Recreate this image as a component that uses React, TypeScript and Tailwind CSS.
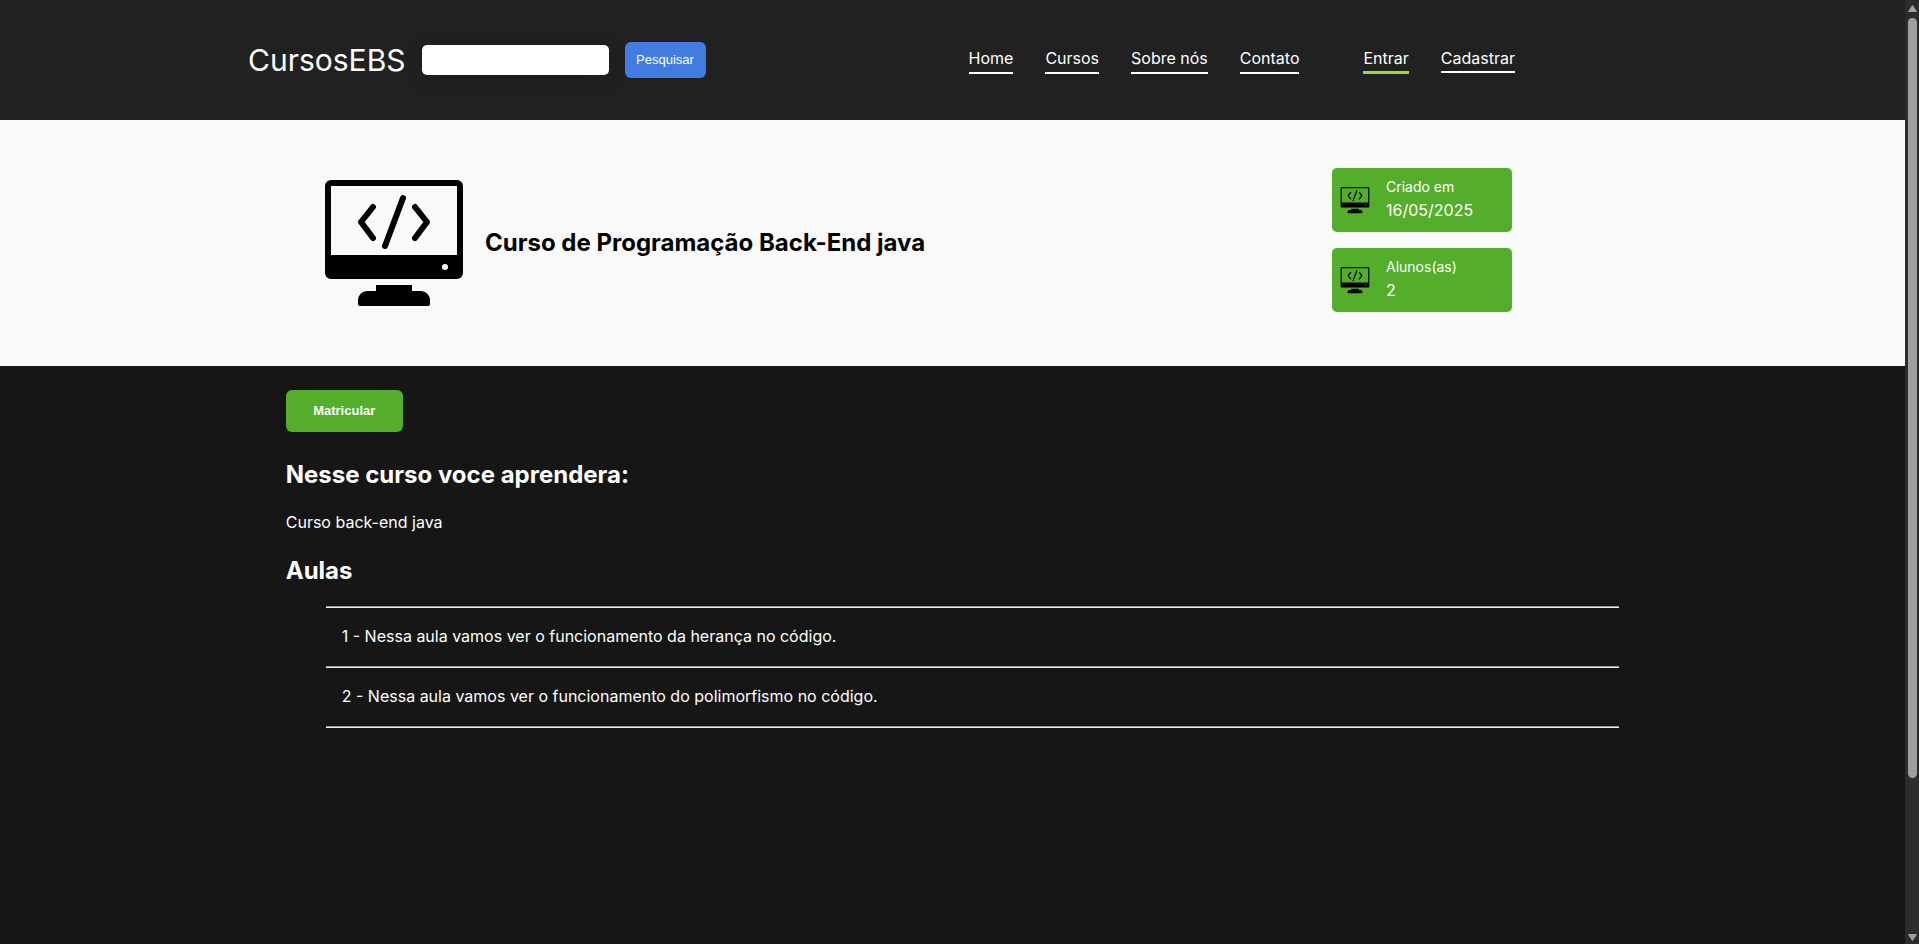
import React from "react";

const navLinks = ["Home", "Cursos", "Sobre nós", "Contato"];

const stats = [
  { label: "Criado em", value: "16/05/2025" },
  { label: "Alunos(as)", value: "2" },
];

const lessons = [
  "1 - Nessa aula vamos ver o funcionamento da herança no código.",
  "2 - Nessa aula vamos ver o funcionamento do polimorfismo no código.",
];

function ComputerIcon({ className }: { className: string }) {
  return (
    <svg viewBox="0 0 144 144" className={className} aria-hidden="true">
      <path
        fillRule="evenodd"
        d="M9 9H135a6 6 0 0 1 6 6V102a6 6 0 0 1-6 6H9a6 6 0 0 1-6-6V15a6 6 0 0 1 6-6ZM9 15V84H135V15ZM123 93a3 3 0 1 0 0 6a3 3 0 1 0 0-6Z"
      />
      <path d="M54 114H90V120H99a9 9 0 0 1 9 9V133a2 2 0 0 1-2 2H38a2 2 0 0 1-2-2V129a9 9 0 0 1 9-9H54Z" />
      <path
        d="M51 36L39 51L51 67M93 36L105 51L93 67M81 27L63 75"
        fill="none"
        stroke="black"
        strokeWidth="6"
        strokeLinecap="round"
        strokeLinejoin="round"
      />
    </svg>
  );
}

function Header() {
  return (
    <header className="flex h-[120px] items-center justify-between bg-[#212121] pr-[390px] pl-[248px]">
      <div className="flex items-center gap-4">
        <a href="#" className="text-[30px] leading-9">
          CursosEBS
        </a>
        <form className="flex items-center gap-4" onSubmit={(e) => e.preventDefault()}>
          <input
            type="text"
            aria-label="Pesquisar cursos"
            className="h-[30px] w-[187px] rounded-[5px] bg-white px-2 text-sm text-black shadow-[0_5px_20px_rgba(0,0,0,0.2)]"
          />
          <button className="h-9 w-[81px] rounded-md bg-[#437ce0] font-['Liberation_Sans',Arial,sans-serif] text-[13px]">
            Pesquisar
          </button>
        </form>
      </div>
      <nav className="flex items-start gap-16 leading-6">
        <div className="flex gap-8">
          {navLinks.map((link) => (
            <a key={link} href="#" className="border-b-2 border-white pb-[2px]">
              {link}
            </a>
          ))}
        </div>
        <div className="flex items-start gap-8">
          <a href="#" className="border-b-3 border-[#9fd43c] pb-px">
            Entrar
          </a>
          <a href="#" className="border-b-2 border-white pb-px">
            Cadastrar
          </a>
        </div>
      </nav>
    </header>
  );
}

function Hero() {
  return (
    <section className="flex items-start justify-between bg-[#f9f9f9] pt-12 pr-[393px] pb-[51px] pl-[322px]">
      <div className="flex items-center gap-[19px] pt-[3px]">
        <ComputerIcon className="size-36" />
        <h1 className="text-2xl leading-7 font-bold text-black">Curso de Programação Back-End java</h1>
      </div>
      <dl className="flex flex-col gap-4">
        {stats.map((stat) => (
          <div key={stat.label} className="flex h-16 w-[180px] items-center gap-4 rounded-[5px] bg-[#54ae2b] pl-2">
            <ComputerIcon className="size-[30px]" />
            <div>
              <dt className="text-sm leading-5">{stat.label}</dt>
              <dd className="leading-[26px]">{stat.value}</dd>
            </div>
          </div>
        ))}
      </dl>
    </section>
  );
}

function LessonRule() {
  return <hr className="border-t border-b border-t-[#9a9a9a] border-b-[#eeeeee]" />;
}

export default function App() {
  return (
    <div className="flex min-h-screen bg-[#161616] font-[Inter,sans-serif] text-base text-white">
      <div className="min-w-0 flex-1">
        <Header />
        <Hero />
        <main className="mx-[15%] pt-6">
          <button className="h-[42px] w-[117px] rounded-md bg-[#54ae2b] font-['Liberation_Sans',Arial,sans-serif] text-[13px] font-bold">
            Matricular
          </button>
          <h2 className="mt-7 text-2xl leading-[30px] font-bold">Nesse curso voce aprendera:</h2>
          <p className="mt-5 mb-[22px] leading-6">Curso back-end java</p>
          <h2 className="text-2xl leading-[30px] font-bold">Aulas</h2>
          <ul className="mt-5 pl-10">
            <LessonRule />
            {lessons.map((lesson) => (
              <li key={lesson}>
                <p className="px-4 pt-4 pb-[18px] leading-6">{lesson}</p>
                <LessonRule />
              </li>
            ))}
          </ul>
        </main>
      </div>
      <div className="sticky top-0 flex h-screen w-[14px] flex-col items-center justify-between bg-[#2c2c2c] pt-[5px] pb-[3px]" aria-hidden="true">
        <svg viewBox="0 0 9 7" className="h-[7px] w-[9px]">
          <path d="M4.5 0.5L8.5 6.5H0.5Z" fill="#9f9f9f" stroke="#9f9f9f" strokeLinejoin="round" />
        </svg>
        <div className="mt-[6px] w-[9px] flex-1">
          <div className="h-[83%] rounded-full bg-[#9f9f9f]" />
        </div>
        <svg viewBox="0 0 9 7" className="h-[7px] w-[9px]">
          <path d="M4.5 6.5L8.5 0.5H0.5Z" fill="#9f9f9f" stroke="#9f9f9f" strokeLinejoin="round" />
        </svg>
      </div>
    </div>
  );
}
